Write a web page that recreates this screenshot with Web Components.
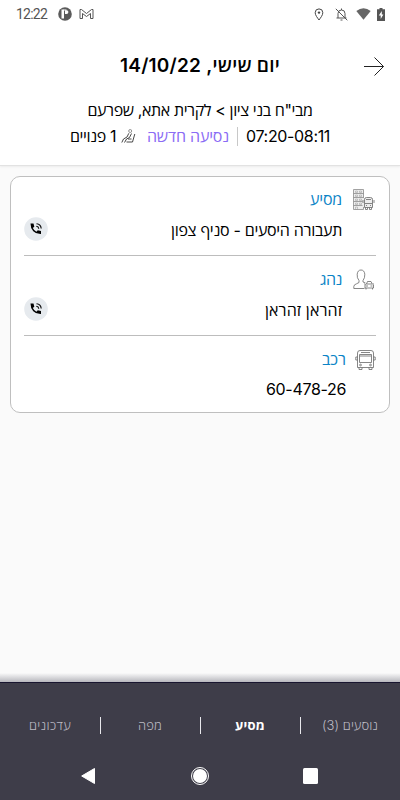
<!DOCTYPE html>
<html lang="he" dir="rtl">
<head>
<meta charset="utf-8">
<title>פרטי נסיעה</title>
<style>
  body {
    margin: 0;
    background: #fafafa;
    color: #000;
    font-family: Inter, "Open Sans", "Noto Sans", "Liberation Sans", sans-serif;
  }
</style>
</head>
<body>
<ride-screen></ride-screen>

<script>
// Single line of text, tracked so that it fills the given width
class FitText extends HTMLElement {
  constructor() {
    super();
    this.attachShadow({ mode: "open" });
  }

  connectedCallback() {
    this.shadowRoot.innerHTML = `
  <style>
    :host {
      display: block;
      flex: none;
      white-space: nowrap;
      line-height: 20px;
      width: ${this.getAttribute("width")}px;
    }
    span { display: inline-block; }
  </style>
  <span><slot></slot></span>
`;
    const span = this.shadowRoot.querySelector("span");
    const count = this.textContent.length;
    const extra = Number(this.getAttribute("width")) - span.getBoundingClientRect().width;
    span.style.letterSpacing = `${extra / count}px`;
  }
}

class StatusBar extends HTMLElement {
  constructor() {
    super();
    this.attachShadow({ mode: "open" });
    this.shadowRoot.innerHTML = `
  <style>
    :host {
      display: flex;
      direction: ltr;
      align-items: center;
      height: 28px;
      padding: 0 15px 0 16px;
      box-sizing: border-box;
      color: #555;
      font: 14px Roboto, sans-serif;
    }
    .logo { margin-left: 11px; }
    .mail { margin-left: 7px; }
    .pin { margin-left: auto; }
    .bell { margin-left: 11px; }
    .wifi { margin-left: 8px; }
    .battery { margin-left: 6px; }
    svg { display: block; flex: none; }
  </style>
  <fit-text width="31">12:22</fit-text>
  <svg class="logo" width="14" height="14" viewBox="0 0 14 14">
    <circle cx="7" cy="7" r="6.8" fill="#5b5b5b"/>
    <path d="M3.500 2.500H6v9H3.500zM7 3.200h1.500a1.900 1.900 0 0 1 0 3.800H7z" fill="#fff"/>
    <path d="M5.500 2.500h3v1h-3z" fill="#fff"/>
  </svg>
  <svg class="mail" width="15" height="12" viewBox="0 0 15 12" fill="none" stroke="#555">
    <path d="M1 10.500V1.500h1.500l5 4l5-4H14v9h-2.500V5.500L7.500 8.500L3.500 5.500v5z"/>
  </svg>
  <svg class="pin" width="10" height="13" viewBox="0 0 10 13" fill="none" stroke="#444">
    <path d="M5 12C3.500 9.800 1.200 7.300 1.200 4.700a3.800 3.800 0 0 1 7.600 0C8.800 7.300 6.500 9.800 5 12z"/>
    <circle cx="5" cy="4.600" r="1.200" fill="#444" stroke="none"/>
  </svg>
  <svg class="bell" width="13" height="13" viewBox="0 0 13 13" fill="none" stroke="#555">
    <path d="M3 10V5.500Q3 2 6.500 2T10 5.500V10M1.500 10H11.500M6.500 .5V2M5.500 12h2M.8 .8L12.300 12.300"/>
  </svg>
  <svg class="wifi" width="15" height="12" viewBox="0 0 15 12">
    <path d="M.3 3Q7.500-2.300 14.700 3L7.500 11.700z" fill="#666"/>
  </svg>
  <svg class="battery" width="8" height="13" viewBox="0 0 8 13">
    <path d="M2.500 0h3v1.300H8V13H0V1.300h2.500z" fill="#555"/>
    <path d="M4.800 3L1.800 7.600h1.900V11l2.700-4.500H4.800z" fill="#fff"/>
  </svg>
`;
  }
}

class RideHeader extends HTMLElement {
  constructor() {
    super();
    this.attachShadow({ mode: "open" });
    this.shadowRoot.innerHTML = `
  <style>
    :host {
      display: block;
      height: 166px;
      box-sizing: border-box;
      background: #fff;
      border-bottom: 1px solid #e2e2e2;
      box-shadow: 0 1px 2px rgba(0, 0, 0, .06);
    }
    .title {
      display: grid;
      grid-template-columns: 1fr auto 1fr;
      align-items: center;
      height: 76px;
      padding: 0 16px;
      font-size: 19px;
      font-weight: 600;
    }
    .route {
      display: flex;
      justify-content: center;
      height: 20px;
      margin-top: -4px;
      font-size: 16px;
    }
    .facts {
      display: flex;
      align-items: center;
      height: 20px;
      margin-top: 6px;
      padding-right: 70px;
      font-size: 16px;
    }
    .bar { width: 1px; height: 19px; margin: 0 8px; background: #c8c8c8; }
    .fresh { color: #8b6cf5; }
    .seat { margin: 0 11px 0 5px; }
    svg { display: block; flex: none; }
  </style>
  <status-bar></status-bar>
  <div class="title">
    <svg width="21" height="20" viewBox="0 0 21 20" fill="none" stroke="#222">
      <path d="M1 10.500H20.500M11.500 1.500L20.500 10.500L11.500 19.500"/>
    </svg>
    <fit-text width="160">יום שישי, 14/10/22</fit-text>
  </div>
  <div class="route"><fit-text width="225">מבי"ח בני ציון &gt; לקרית אתא, שפרעם</fit-text></div>
  <div class="facts">
    <fit-text width="84" dir="ltr">07:20-08:11</fit-text>
    <div class="bar"></div>
    <fit-text class="fresh" width="82">נסיעה חדשה</fit-text>
    <svg class="seat" width="15" height="15" viewBox="0 0 15 15" fill="none" stroke="#333" stroke-width=".9">
      <circle cx="9.200" cy="2" r="1.500" stroke="#888"/>
      <path d="M7.800 4.300L6 8L2.500 10L.8 13.500M10.500 4.500L8.500 8.500L5.500 10L3.500 13.500M13.800 5L11.500 13H5.500M10.500 10H7"/>
    </svg>
    <fit-text width="46">1 פנויים</fit-text>
  </div>
`;
  }
}

const ICONS = {
  company: `
    <g fill="#ededed" stroke="none"><path d="M1 1h10v19H1zM11 9h9v9h-9z"/></g>
    <path d="M10.500 9V.5H.5V20.500H10.500V18M.5 4.500h10M.5 8.500h10M.5 12.500h9M.5 16.500h9" stroke="#8a8a8a"/>
    <path d="M2.500 2h2v1.500h-2zM6.500 2h2v1.500h-2zM2.500 6h2v1.500h-2zM6.500 6h2v1.500h-2zM2.500 10h2v1.500h-2zM6.500 10h2v1.500h-2zM2.500 14h2v1.500h-2zM6.500 14h2v1.500h-2zM2.500 18h2v2.500h-2z" stroke="#999" stroke-width=".5"/>
    <path d="M11.500 18.500V10.500Q11.500 8.500 13.500 8.500h4Q19.500 8.500 19.500 10.500v8zM12 14.500h7M10 11v3M21 11v3M12.500 18.500v2h2v-2M16.500 18.500v2h2v-2M13 10.500h5M13 16.500h1M17 16.500h1"/>`,
  driver: `
    <path d="M11.500 19.500H.8V17.500Q1 15.500 3.500 14.800L6 13.500V11.500Q3.800 9 4.200 5.200Q4.700 1 8 1T11.800 5.200Q12 9 10 11.500V13L12.500 14"/>
    <path d="M12 19V16L13.500 15L14.500 12.500H18L19.300 15L20.500 16V19zM13.500 15H19M13 19v1.500M19.500 19v1.500M13 17h2M17.500 17h2M11 15h1M20 15h1"/>`,
  bus: `
    <path d="M2.500 18.500V4Q2.500 1.500 5 1.500H16Q18.500 1.500 18.500 4V18.500zM4.500 5.500H16.500V13.500H4.500zM6 3.500H15M2.500 8H.8V11H2.500M18.500 8H20.200V11H18.500M4 18.500V20.500H7V18.500M14 18.500V20.500H17V18.500M5 7H16"/>
    <circle cx="5.500" cy="16" r=".9"/><circle cx="15.500" cy="16" r=".9"/>`
};

class DetailRow extends HTMLElement {
  constructor() {
    super();
    this.attachShadow({ mode: "open" });
  }

  connectedCallback() {
    this.shadowRoot.innerHTML = `
  <style>
    :host {
      display: flex;
      height: 80px;
      box-sizing: border-box;
      border-bottom: 1px solid #bdbdbd;
      font-size: 16px;
    }
    :host(:first-child) { height: 79px; }
    :host(:last-child) { border-bottom: 0; }
    .icon { margin: 13px 1px 0 11px; }
    :host(:first-child) .icon { margin-top: 12px; }
    :host([icon="bus"]) .icon { margin: 13px -1px 0 9px; }
    .text { flex: 1; padding-top: 13px; }
    :host(:first-child) .text { padding-top: 12px; }
    .label { height: 31px; color: #0c84c6; }
    :host([icon="bus"]) .label { height: 30px; }
    .call { margin-top: 40.500px; }
    :host(:first-child) .call { margin-top: 39.500px; }
    svg { display: block; flex: none; }
  </style>
  <svg class="icon" width="22" height="22" viewBox="0 0 22 22" fill="none" stroke="#686868" stroke-width=".8">${ICONS[this.getAttribute("icon")]}</svg>
  <div class="text">
    <div class="label"><slot name="label"></slot></div>
    <slot></slot>
  </div>
  ${this.hasAttribute("call") ? `
  <svg class="call" width="24" height="24" viewBox="0 0 24 24">
    <circle cx="12" cy="12" r="11.800" fill="#e6eaee"/>
    <path d="M6.500 6.500h3l.8 3.200-1.500 1.400q1.200 2.500 3.600 3.700l1.400-1.500 3.200.8v3q-4.800.2-7.700-2.900T6.500 6.500z"/>
    <path d="M12.300 9.300q2.200.2 2.500 2.500M12.500 6.800q4.300.3 4.700 4.700" fill="none" stroke="#000" stroke-width="1.100"/>
  </svg>` : ""}
`;
  }
}

class DetailCard extends HTMLElement {
  constructor() {
    super();
    this.attachShadow({ mode: "open" });
    this.shadowRoot.innerHTML = `
  <style>
    :host {
      display: block;
      height: 237px;
      margin: 10px 10px 0;
      padding: 0 13px;
      box-sizing: border-box;
      background: #fff;
      border: 1px solid #bfbfbf;
      border-radius: 10px;
    }
  </style>
  <slot></slot>
`;
  }
}

class TabBar extends HTMLElement {
  constructor() {
    super();
    this.attachShadow({ mode: "open" });
    this.shadowRoot.innerHTML = `
  <style>
    :host {
      display: block;
      height: 127px;
      margin-top: auto;
    }
    .shade { height: 9px; background: linear-gradient(#fafafa, #b7b7bd); }
    .panel {
      height: 118px;
      box-sizing: border-box;
      background: #3e3d49;
      border-top: 1px solid #18152f;
    }
    .tabs {
      display: grid;
      grid-template-columns: repeat(4, 1fr);
      height: 69px;
      padding-top: 15px;
      box-sizing: border-box;
    }
    .nav {
      display: flex;
      direction: ltr;
      justify-content: space-between;
      align-items: center;
      height: 48px;
      padding: 0 81px;
    }
    svg { display: block; }
  </style>
  <div class="shade"></div>
  <div class="panel">
    <div class="tabs"><slot></slot></div>
    <div class="nav">
      <svg width="15" height="18" viewBox="0 0 15 18"><path d="M13.500 1.500V16.500L.7 9z" fill="#fff" stroke="#fff" stroke-linejoin="round"/></svg>
      <svg width="20" height="20" viewBox="0 0 20 20"><circle cx="10" cy="10" r="8.500" fill="none" stroke="#fff"/><circle cx="10" cy="10" r="7" fill="#fff"/></svg>
      <svg width="16" height="16" viewBox="0 0 16 16"><rect width="15" height="16" rx="1.500" fill="#fff"/></svg>
    </div>
  </div>
`;
  }
}

class TabItem extends HTMLElement {
  constructor() {
    super();
    this.attachShadow({ mode: "open" });
    this.shadowRoot.innerHTML = `
  <style>
    :host {
      display: flex;
      justify-content: center;
      align-items: center;
      color: #bcbbc3;
      font-size: 13px;
      font-weight: 300;
      background: linear-gradient(#e8e8ec, #e8e8ec) left center / 1px 17px no-repeat;
    }
    :host(:last-child) { background: none; }
    :host([active]) { color: #fff; font-weight: 700; }
  </style>
  <slot></slot>
`;
  }
}

class RideScreen extends HTMLElement {
  constructor() {
    super();
    this.attachShadow({ mode: "open" });
    this.shadowRoot.innerHTML = `
  <style>
    :host {
      display: flex;
      flex-direction: column;
      width: 400px;
      height: 800px;
      overflow: hidden;
    }
  </style>
  <ride-header></ride-header>
  <detail-card>
    <detail-row icon="company" call>
      <fit-text slot="label" width="32">מסיע</fit-text>
      <fit-text width="171">תעבורה היסעים - סניף צפון</fit-text>
    </detail-row>
    <detail-row icon="driver" call>
      <fit-text slot="label" width="22">נהג</fit-text>
      <fit-text width="77">זהראן זהראן</fit-text>
    </detail-row>
    <detail-row icon="bus">
      <fit-text slot="label" width="24">רכב</fit-text>
      <fit-text width="80" dir="ltr">60-478-26</fit-text>
    </detail-row>
  </detail-card>
  <tab-bar>
    <tab-item><fit-text width="56">נוסעים (3)</fit-text></tab-item>
    <tab-item active><fit-text width="30">מסיע</fit-text></tab-item>
    <tab-item><fit-text width="24">מפה</fit-text></tab-item>
    <tab-item><fit-text width="42">עדכונים</fit-text></tab-item>
  </tab-bar>
`;
  }
}

// Text goes last, it is measured once the rows around it are laid out
customElements.define("status-bar", StatusBar);
customElements.define("ride-header", RideHeader);
customElements.define("detail-row", DetailRow);
customElements.define("detail-card", DetailCard);
customElements.define("tab-item", TabItem);
customElements.define("tab-bar", TabBar);
customElements.define("ride-screen", RideScreen);
customElements.define("fit-text", FitText);
</script>
</body>
</html>
